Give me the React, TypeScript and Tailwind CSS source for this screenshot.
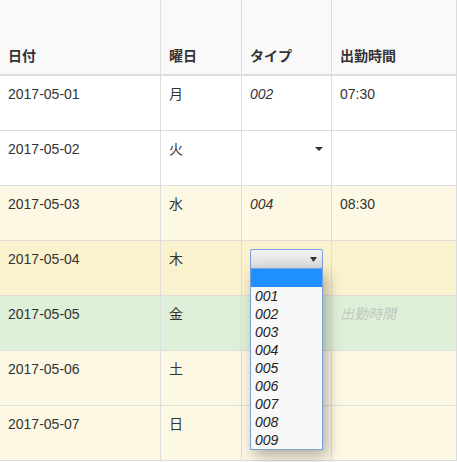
const rows = [
  { date: "2017-05-01", day: "月", type: "002", time: "07:30", bg: "bg-white" },
  { date: "2017-05-02", day: "火", type: "", time: "", bg: "bg-white", select: true },
  { date: "2017-05-03", day: "水", type: "004", time: "08:30", bg: "bg-[#fcf8e3]" },
  { date: "2017-05-04", day: "木", type: "", time: "", bg: "bg-[#faf2cc]", open: true },
  { date: "2017-05-05", day: "金", type: "", time: "", bg: "bg-[#dff0d8]", placeholder: true },
  { date: "2017-05-06", day: "土", type: "", time: "", bg: "bg-[#fcf8e3]" },
  { date: "2017-05-07", day: "日", type: "", time: "", bg: "bg-[#fcf8e3]" },
];

const options = ["001", "002", "003", "004", "005", "006", "007", "008", "009"];

function Caret({ w = 8, h = 4 }: { w?: number; h?: number }) {
  return (
    <svg width={w} height={h} viewBox={`0 0 ${w} ${h}`} className="block">
      <polygon points={`0,0 ${w},0 ${w / 2},${h}`} fill="#333" />
    </svg>
  );
}

function OpenSelect() {
  return (
    <div className="relative w-[73px] h-[20px]">
      <div className="h-full rounded-[2px] border border-[#7b9fd9] bg-gradient-to-b from-[#f2f2f2] to-[#dcdcdc] flex items-center justify-end pr-[5px]">
        <Caret w={7} h={5} />
      </div>
      <div className="absolute left-0 top-[19px] w-[73px] border border-[#7b9fd9] bg-[#f8f8f8] shadow-[4px_6px_14px_rgba(0,0,0,0.3)] z-10">
        <div className="h-[18px] bg-[#1e90ff]" />
        {options.map((o) => (
          <div key={o} className="h-[18px] leading-[18px] pl-[4px] italic text-[14px] text-[#222]">
            {o}
          </div>
        ))}
      </div>
    </div>
  );
}

export default function App() {
  const cell = "border-r border-b border-[#ddd] px-2 pt-2 leading-5";
  return (
    <div
      className="w-[457px] h-[462px] overflow-hidden bg-white text-[14px] text-[#333]"
      style={{ fontFamily: '"Liberation Sans", "Noto Sans CJK JP", sans-serif' }}
    >
      <div className="grid grid-cols-[161px_81px_90px_1fr]">
        {["日付", "曜日", "タイプ", "出勤時間"].map((h) => (
          <div
            key={h}
            className="h-[76px] bg-[#f9f9f9] border-r border-b-2 border-[#ddd] px-2 pb-2 flex items-end font-bold leading-5"
          >
            {h}
          </div>
        ))}
        {rows.map((r) => (
          <div key={r.date} className="contents">
            <div className={`${cell} ${r.bg} h-[55px]`}>{r.date}</div>
            <div className={`${cell} ${r.bg} h-[55px]`}>{r.day}</div>
            <div className={`${cell} ${r.bg} h-[55px] italic`}>
              {r.type}
              {r.select && (
                <div className="w-[73px] h-[20px] flex items-center justify-end">
                  <Caret />
                </div>
              )}
              {r.open && <OpenSelect />}
            </div>
            <div className={`${cell} ${r.bg} h-[55px]`}>
              {r.time}
              {r.placeholder && <span className="italic text-[#bfc8bd]">出勤時間</span>}
            </div>
          </div>
        ))}
      </div>
    </div>
  );
}
